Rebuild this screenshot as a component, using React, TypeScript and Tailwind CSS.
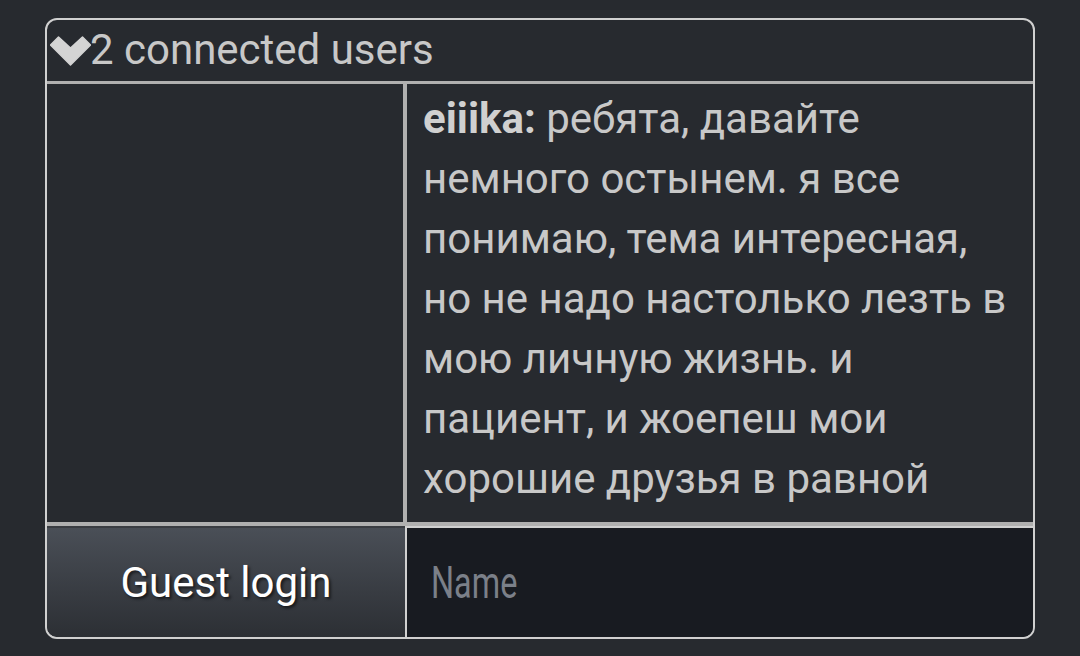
const font = { fontFamily: "Roboto, 'Noto Sans', sans-serif" }

function Chevron() {
  return (
    <svg width="41" height="30" viewBox="-0.5 -1 41 30" className="shrink-0">
      <polygon points="0,8 8,0 20,11 32,0 40,8 20,28" fill="#d4d4d4" stroke="#d4d4d4" strokeWidth="1.5" strokeLinejoin="round" />
    </svg>
  )
}

export default function App() {
  return (
    <div className="w-[1080px] h-[656px] bg-[#272a2f] pt-[18px] pl-[45px]" style={font}>
      <div className="w-[990px] h-[621px] flex flex-col border-2 border-[#d0d0d0] rounded-[12px] overflow-hidden">
        {/* Header */}
        <div className="h-[64px] shrink-0 flex items-center pl-[3px] border-b-[3px] border-[#b0b0b0] text-[#c8c8c8] text-[42px] leading-none">
          <Chevron />
          <span className="-mt-[1px] -ml-[1px]">2 connected users</span>
        </div>

        {/* Body */}
        <div className="h-[442px] shrink-0 flex border-b-4 border-[#b0b0b0]">
          <div className="w-[360px] border-r-4 border-[#b0b0b0]" />
          <div className="flex-1 overflow-hidden pl-[16px] pr-[22px] pt-[5px] text-[42px] leading-[60px] text-[#c8c8c8]">
            <b className="font-bold text-[#d0d0d0]">eiiika:</b> ребята, давайте немного остынем. я все понимаю,
            тема интересная, но не надо настолько лезть в мою личную жизнь. и пациент, и жоепеш мои хорошие
            друзья в равной степени, и я не хочу никого обижать
          </div>
        </div>

        {/* Bottom */}
        <div className="flex-1 flex">
          <button className="w-[358px] border-t-2 border-[#3a3d42] bg-gradient-to-b from-[#4a4f57] to-[#2c2f34] text-white text-[42px] [text-shadow:2px_2px_3px_rgba(0,0,0,0.6)] rounded-bl-[10px]">
            Guest login
          </button>
          <div className="flex-1 bg-[#181b21] border-l-2 border-t-2 border-[#d0d0d0] flex items-center pl-[24px] text-[45px] text-[#7b8089]">
            <span className="inline-block origin-left scale-x-[0.72]">Name</span>
          </div>
        </div>
      </div>
    </div>
  )
}
